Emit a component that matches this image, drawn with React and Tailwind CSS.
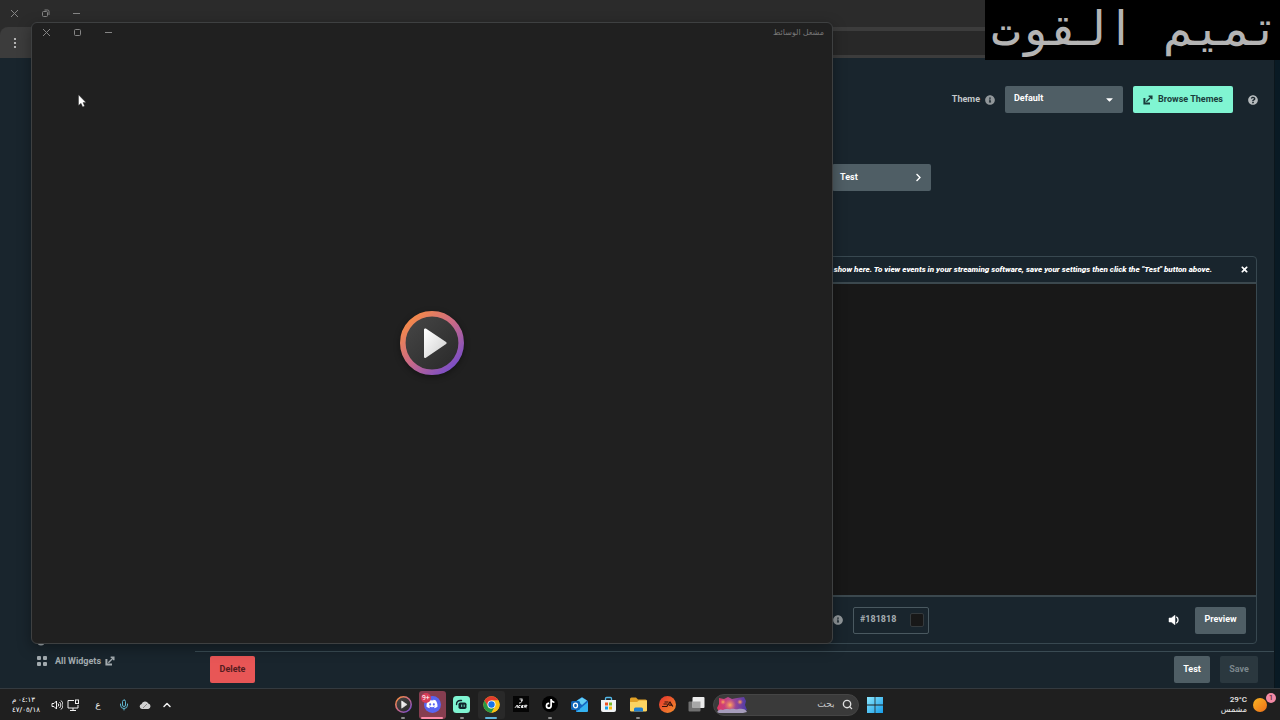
import React from 'react'
import { ChevronUp, Mic, Search } from 'lucide-react'
import { FaDiscord, FaTiktok, FaInfoCircle, FaQuestionCircle, FaCaretDown, FaChevronRight, FaTimes } from 'react-icons/fa'
import clsx from 'clsx'

const uiFont = 'font-[Roboto,"DejaVu_Sans",sans-serif]'

function CloseGlyph() {
  return (
    <svg width="9" height="9" viewBox="0 0 9 9" fill="none" stroke="currentColor">
      <path d="M1 1l7 7M8 1L1 8" />
    </svg>
  )
}

function MaximizeGlyph() {
  return (
    <svg width="9" height="9" viewBox="0 0 9 9" fill="none" stroke="currentColor">
      <rect x="1.5" y="1.5" width="6" height="6" rx="1" />
    </svg>
  )
}

function RestoreGlyph() {
  return (
    <svg width="9" height="9" viewBox="0 0 9 9" fill="none" stroke="currentColor">
      <rect x="1.5" y="2.5" width="5" height="5" rx="1" />
      <path d="M3.5 1h3.2c.8 0 1.3.5 1.3 1.3V6" />
    </svg>
  )
}

function MinimizeGlyph() {
  return (
    <svg width="9" height="9" viewBox="0 0 9 9" fill="none" stroke="currentColor">
      <path d="M1 4.5h7" />
    </svg>
  )
}

function WindowControls({ maximized }) {
  const controls = [
    { label: 'Close', icon: CloseGlyph },
    { label: maximized ? 'Restore' : 'Maximize', icon: maximized ? RestoreGlyph : MaximizeGlyph },
    { label: 'Minimize', icon: MinimizeGlyph },
  ]
  return (
    <div className="flex h-full">
      {controls.map(({ label, icon: Icon }) => (
        <button key={label} type="button" aria-label={label} className="flex w-[31px] items-center justify-center pr-[2px] pb-px text-[#858585]">
          <Icon />
        </button>
      ))}
    </div>
  )
}

function ExternalIcon({ size = 10 }) {
  return (
    <svg width={size} height={size} viewBox="0 0 12 12" fill="none" stroke="currentColor">
      <path d="M1.700 3.600V10.300H8.400" strokeWidth="2.400" />
      <path d="M4 8L10 2" strokeWidth="1.600" />
      <path d="M6.800 1.500h3.700v3.700" strokeWidth="1.900" />
    </svg>
  )
}

function VolumeIcon() {
  return (
    <svg width="12" height="12" viewBox="0 0 12 12" fill="currentColor">
      <path d="M1 4h2.300L7 1.200v9.600L3.300 8H1z" stroke="currentColor" strokeWidth="0.500" strokeLinejoin="round" />
      <path d="M8.300 2.800a3.800 3.800 0 0 1 0 6.400" fill="none" stroke="currentColor" strokeWidth="1.300" />
    </svg>
  )
}

function Sidebar() {
  return (
    <nav className="flex w-[195px] shrink-0 flex-col justify-end gap-2 pb-5 pl-9 text-[#a3abaf]">
      <a href="#alerts" aria-label="Alerts" className="pl-px">
        <svg width="8" height="8" viewBox="0 0 8 8" fill="currentColor">
          <circle cx="4" cy="4" r="3.500" />
        </svg>
      </a>
      <a href="#widgets" className="flex items-center text-[9px] leading-[14px] font-bold">
        <svg width="12" height="12" viewBox="0 0 12 12" fill="currentColor">
          <rect x="1" y="1" width="4" height="4" rx="1" />
          <rect x="7" y="1" width="4" height="4" rx="1" />
          <rect x="1" y="7" width="4" height="4" rx="1" />
          <rect x="7" y="7" width="4" height="4" rx="1" />
        </svg>
        <span className="mr-1 ml-[7px]">All Widgets</span>
        <ExternalIcon />
      </a>
    </nav>
  )
}

function ThemeBar() {
  return (
    <div className="flex h-[27px] items-center justify-end">
      <label htmlFor="theme" className="text-[9px] font-bold text-[#c3c8ca]">Theme</label>
      <FaInfoCircle size={10} className="mr-[10px] ml-[5px] text-[#91979a]" />
      <div className="relative h-full w-[118px]">
        <select id="theme" className="block h-full w-full appearance-none rounded-xs bg-[#4f5e65] px-[9px] pb-[2px] text-[9px] font-bold text-white">
          <option>Default</option>
        </select>
        <FaCaretDown size={11} className="pointer-events-none absolute top-2 right-2 text-white" />
      </div>
      <button type="button" className="ml-[10px] flex h-full w-[100px] items-center justify-center gap-[5px] rounded-xs bg-[#80f5d2] text-[9px] font-bold whitespace-nowrap text-[#1a3d3c]">
        <ExternalIcon />
        Browse Themes
      </button>
      <button type="button" aria-label="Help" className="ml-[15px] text-[#b5babc]">
        <FaQuestionCircle size={10} />
      </button>
    </div>
  )
}

function PreviewPanel() {
  return (
    <section className="mt-[65px] mr-px mb-[7px] flex flex-1 flex-col overflow-hidden rounded-[4px] border border-[#384850]">
      <div className="flex h-[27px] shrink-0 items-center justify-end border-b-2 border-[#3b484e] pr-[7px]">
        <p className="text-[8px] font-black text-white italic">
          show here. To view events in your streaming software, save your settings then click the "Test" button above.
        </p>
        <button type="button" aria-label="Dismiss" className="ml-7 text-white">
          <FaTimes size={9} />
        </button>
      </div>
      <div className="flex-1 bg-[#181818]" />
      <div className="flex h-[48px] shrink-0 items-center border-t-2 border-[#3b484e] pr-[10px]">
        <div className="flex flex-1 items-center pl-[622px]">
          <FaInfoCircle size={10} className="mr-[10px] shrink-0 text-[#91979a]" />
          <div className="flex h-[27px] w-[76px] shrink-0 items-center rounded-xs border border-[#4a5960] pr-1 pl-[6px]">
            <input
              aria-label="Background color"
              defaultValue="#181818"
              className="w-0 flex-1 bg-transparent text-[9px] font-bold text-[#a6adb1] outline-none"
            />
            <span className="h-[14px] w-[14px] rounded-xs border border-[#343a3d] bg-[#181818]" />
          </div>
        </div>
        <button type="button" aria-label="Volume" className="mr-[15px] text-white">
          <VolumeIcon />
        </button>
        <button type="button" className="h-[27px] w-[51px] rounded-xs bg-[#4f5e65] text-[9px] font-bold text-white">
          Preview
        </button>
      </div>
    </section>
  )
}

function BrowserWindow() {
  return (
    <div className="flex min-h-0 flex-1 flex-col">
      <div className="h-[27px] shrink-0 bg-[#2b2b2b]">
        <WindowControls maximized />
      </div>
      <div className="shrink-0 bg-[#2b2b2b]">
        <div className="flex h-[31px] items-center rounded-tl-lg bg-[#3c3c3c]">
          <button type="button" aria-label="Menu" className="flex w-[29px] justify-center text-[#d0d0d0]">
            <svg width="4" height="12" viewBox="0 0 4 12" fill="currentColor">
              <circle cx="2" cy="2" r="1.1" />
              <circle cx="2" cy="6" r="1.1" />
              <circle cx="2" cy="10" r="1.1" />
            </svg>
          </button>
          <div className="ml-5 h-6 flex-1 bg-[#282828]" />
        </div>
      </div>
      <div className="flex min-h-0 flex-1 bg-[#19252d]">
        <Sidebar />
        <main className="flex min-w-0 flex-1 flex-col">
          <div className="flex flex-1 flex-col pt-7 pr-4 pl-[15px]">
            <ThemeBar />
            <div className="mt-[51px] flex h-[27px] pl-[622px]">
              <button type="button" className="flex w-[99px] items-center justify-between rounded-xs bg-[#4f5e65] pr-2 pl-2 text-[9px] font-bold text-white">
                Test
                <FaChevronRight size={9} />
              </button>
            </div>
            <PreviewPanel />
          </div>
          <div className="flex h-[37px] shrink-0 items-center border-t border-[#3a4b53] pr-4 pb-px pl-[15px] text-[9px]">
            <button type="button" className="h-[27px] w-[45px] rounded-xs bg-[#e85656] font-bold text-[#551c20]">Delete</button>
            <button type="button" className="ml-auto h-[27px] w-9 rounded-xs bg-[#4f5e65] font-bold text-white">Test</button>
            <button type="button" className="ml-[10px] h-[27px] w-[38px] rounded-xs bg-[#2b383f] font-bold text-[#7a868c]">Save</button>
          </div>
        </main>
        <div className="w-[6px] shrink-0 border-l border-[#0b161c] bg-[#091a24]" />
      </div>
    </div>
  )
}

function PlayLogo({ size, id, ring = 3 }) {
  return (
    <svg width={size} height={size} viewBox="0 0 32 32" className="shrink-0">
      <defs>
        <linearGradient id={`${id}-ring`} x1="0.1" y1="0.1" x2="0.85" y2="0.9">
          <stop offset="0" stopColor="#f58a48" />
          <stop offset="0.5" stopColor="#ca6a87" />
          <stop offset="1" stopColor="#7e4fc4" />
        </linearGradient>
        <linearGradient id={`${id}-face`} x1="0" y1="0" x2="1" y2="1">
          <stop offset="0" stopColor="#484848" />
          <stop offset="1" stopColor="#272727" />
        </linearGradient>
        <linearGradient id={`${id}-play`} x1="0" y1="0" x2="1" y2="1">
          <stop offset="0" stopColor="#ffffff" />
          <stop offset="1" stopColor="#cfcfcf" />
        </linearGradient>
      </defs>
      <circle cx="16" cy="16" r={16 - ring / 2} fill={`url(#${id}-face)`} stroke={`url(#${id}-ring)`} strokeWidth={ring} />
      <path d="M12.6 9.3L22.7 16L12.6 22.9z" fill={`url(#${id}-play)`} stroke={`url(#${id}-play)`} strokeWidth="1.2" strokeLinejoin="round" />
    </svg>
  )
}

function MediaPlayer() {
  return (
    <div className="absolute top-[22px] left-[31px] flex h-[622px] w-[802px] flex-col rounded-md border border-[#3e4041] bg-[#202020] shadow-[0_4px_14px_rgba(0,0,0,0.35)]">
      <div className="flex h-5 shrink-0 items-center justify-between pr-2">
        <WindowControls />
        <span dir="rtl" className="text-[8px] text-[#777777]">مشغل الوسائط</span>
      </div>
      <div className="flex flex-1 items-center justify-center">
        <div className="rounded-full shadow-[0_2px_6px_rgba(0,0,0,0.4)]">
          <PlayLogo size={64} id="player" ring={2.8} />
        </div>
      </div>
    </div>
  )
}

function DiscordIcon() {
  return (
    <span className="flex h-[17px] w-[17px] items-center justify-center rounded-full bg-[#5865f2] text-white">
      <FaDiscord size={12} />
    </span>
  )
}

function TiktokIcon() {
  return (
    <span className="flex h-4 w-4 items-center justify-center rounded-full bg-black text-white">
      <FaTiktok size={10} />
    </span>
  )
}

function StreamlabsIcon() {
  return (
    <svg width="17" height="17" viewBox="0 0 17 17">
      <rect width="17" height="17" rx="3.500" fill="#80f5d2" />
      <path d="M3.500 8.500C3.500 6 5 4.500 7.500 4.500H8.500" fill="none" stroke="#10242b" strokeWidth="1.400" strokeLinecap="round" />
      <rect x="5.500" y="6.500" width="8" height="6.500" rx="1.800" fill="#10242b" />
      <path d="M8.700 9v1.500M11.200 9v1.500" stroke="#80f5d2" strokeWidth="0.900" strokeLinecap="round" />
    </svg>
  )
}

function ChromeIcon() {
  return (
    <svg width="17" height="17" viewBox="0 0 48 48">
      <circle cx="24" cy="24" r="23" fill="#fbc116" />
      <path d="M4.1 12.500A23 23 0 0 1 43.900 12.500H24L14 29.700z" fill="#e33b2e" />
      <path d="M4.100 12.500L14 29.700C16 33 20 35.500 24 35.500L33.900 29.700L24 47A23 23 0 0 1 4.100 12.500z" fill="#279847" />
      <path d="M24 12.500H43.900A23 23 0 0 1 24 47L34 29.700z" fill="#fbc116" />
      <circle cx="24" cy="24" r="11.500" fill="#fff" />
      <circle cx="24" cy="24" r="9" fill="#1a73e8" />
    </svg>
  )
}

function AcerIcon() {
  return (
    <svg width="16" height="16" viewBox="0 0 16 16">
      <rect width="16" height="16" fill="#050505" />
      <path d="M6.500 3h3L8 4.500h1.500L7.500 7H6" stroke="#ddd" fill="none" />
      <path d="M2 11.800L4.300 9v2.800M7.500 9.500H6L5.300 11.500h1.600M10.500 9.500H8.800L8.200 11.500h1.900M8.500 10.500h1.500M11 11.800l.7-2.500h2.300l-.6 1.300h-1.500l1.600 1.200" stroke="#eee" fill="none" />
    </svg>
  )
}

function OutlookIcon() {
  return (
    <svg width="17" height="17" viewBox="0 0 17 17">
      <path d="M5 5L11 1L17 5V14.500A1.500 1.500 0 0 1 15.500 16H5z" fill="#1766c0" />
      <path d="M6 4.600L11 1.500L16 4.600L11 9z" fill="#62cff5" />
      <path d="M17 6V14.500A1.500 1.500 0 0 1 15.500 16H5z" fill="#35b3f1" />
      <rect x="0" y="5" width="9" height="9" rx="1.500" fill="#0f65b8" />
      <ellipse cx="4.500" cy="9.500" rx="2" ry="2.300" fill="none" stroke="#fff" strokeWidth="1.300" />
    </svg>
  )
}

function StoreIcon() {
  return (
    <svg width="17" height="17" viewBox="0 0 17 17">
      <path d="M5.500 4V2.500a1 1 0 0 1 1-1h4a1 1 0 0 1 1 1V4" fill="none" stroke="#54b9e8" strokeWidth="1.300" />
      <path d="M1 4h15v10a2 2 0 0 1-2 2H3a2 2 0 0 1-2-2z" fill="#f0f2f4" />
      <path d="M5 6.500h3v3H5z" fill="#ee5424" />
      <path d="M9 6.500h3v3H9z" fill="#7ab829" />
      <path d="M5 10.500h3v3H5z" fill="#18a0e8" />
      <path d="M9 10.500h3v3H9z" fill="#fbb80d" />
    </svg>
  )
}

function FolderIcon() {
  return (
    <svg width="17" height="17" viewBox="0 0 17 17">
      <path d="M0 3a1.500 1.500 0 0 1 1.500-1.500H6L8 3.500h7.500A1.500 1.500 0 0 1 17 5v10H0z" fill="#e2a126" />
      <path d="M0 6h7l2-1.500h8V14a1.500 1.500 0 0 1-1.500 1.500h-14A1.500 1.500 0 0 1 0 14z" fill="#fbd462" />
      <path d="M4 15.500V13a1.500 1.500 0 0 1 1.500-1.500h6A1.500 1.500 0 0 1 13 13v2.500z" fill="#1f7fd1" />
    </svg>
  )
}

function EaIcon() {
  return (
    <svg width="17" height="17" viewBox="0 0 17 17">
      <defs>
        <linearGradient id="ea" x1="0" y1="0" x2="1" y2="1">
          <stop offset="0" stopColor="#e6322e" />
          <stop offset="1" stopColor="#f3902b" />
        </linearGradient>
      </defs>
      <circle cx="8.500" cy="8.500" r="8.500" fill="url(#ea)" />
      <path d="M5.500 6h4M4.500 8h4M3 10.500h4.800L11 6l2.800 4.500M10 9.200h2.500" stroke="#30100c" strokeWidth="1.200" fill="none" />
    </svg>
  )
}

function TaskViewIcon() {
  return (
    <svg width="17" height="17" viewBox="0 0 17 17">
      <rect x="0.500" y="5.500" width="12" height="10" rx="1" fill="#707070" />
      <rect x="4.500" y="1" width="12" height="11" rx="1" fill="#ececec" />
      <path d="M4.500 5.500h8V12h-8z" fill="#a7a7a7" />
    </svg>
  )
}

function WindowsIcon() {
  return (
    <svg width="16" height="16" viewBox="0 0 16 16">
      <defs>
        <linearGradient id="win" x1="0" y1="0" x2="1" y2="1">
          <stop offset="0" stopColor="#8be6fc" />
          <stop offset="1" stopColor="#169de9" />
        </linearGradient>
      </defs>
      <path d="M0 0h7.600v7.600H0zM8.400 0H16v7.600H8.400zM0 8.400h7.600V16H0zM8.400 8.400H16V16H8.400z" fill="url(#win)" />
    </svg>
  )
}

function SearchArt() {
  return (
    <svg width="32" height="18" viewBox="0 0 32 18">
      <defs>
        <linearGradient id="nebula" x1="0" y1="0" x2="1" y2="0">
          <stop offset="0" stopColor="#e2365f" />
          <stop offset="0.450" stopColor="#b34b92" />
          <stop offset="1" stopColor="#473ba8" />
        </linearGradient>
        <radialGradient id="glow">
          <stop offset="0" stopColor="#ffb25c" />
          <stop offset="1" stopColor="#f0705c" stopOpacity="0" />
        </radialGradient>
      </defs>
      <path d="M3 2l5 1 4-2 4 2 5-1 7-1 2 4-1 4 2 5-5 2H3L1 12l2-4z" fill="url(#nebula)" />
      <circle cx="14" cy="9" r="6" fill="url(#glow)" />
      <circle cx="7" cy="6" r="3" fill="url(#glow)" />
      <circle cx="24" cy="6" r="3" fill="url(#glow)" />
      <path d="M1 16c2-3 4-3 6-2 3-2 6 0 8-1 3-1 5 1 7 0 4-1 8 0 9 3l-4 1H3z" fill="#a69dbb" />
    </svg>
  )
}

const apps = [
  { key: 'Media Player', icon: <PlayLogo size={17} id="task" ring={3} />, dot: true },
  { key: 'Discord', icon: <DiscordIcon />, active: true },
  { key: 'Streamlabs', icon: <StreamlabsIcon />, dot: true },
  { key: 'Chrome', icon: <ChromeIcon />, focused: true },
  { key: 'Acer', icon: <AcerIcon /> },
  { key: 'TikTok', icon: <TiktokIcon />, dot: true },
  { key: 'Outlook', icon: <OutlookIcon /> },
  { key: 'Store', icon: <StoreIcon /> },
  { key: 'Explorer', icon: <FolderIcon />, dot: true },
  { key: 'EA', icon: <EaIcon /> },
  { key: 'Task view', icon: <TaskViewIcon /> },
]

function Tray() {
  return (
    <div className="flex flex-1 items-center text-[#f0f0f0]">
      <div dir="rtl" className="w-[30px] text-left text-[7px] leading-[10px] font-medium whitespace-nowrap text-white">
        <div>٠٤:١٣ م</div>
        <div>٤٧/٠٥/١٨</div>
      </div>
      <svg width="12" height="12" viewBox="0 0 12 12" fill="none" stroke="currentColor" className="ml-[9px]">
        <path d="M1 4.500h2L5.500 2v8L3 7.500H1zM7 4.500a2 2 0 0 1 0 3M8.500 3a4 4 0 0 1 0 6M10 1.500a6 6 0 0 1 0 9" />
      </svg>
      <svg width="12" height="12" viewBox="0 0 12 12" fill="none" stroke="currentColor" className="ml-1">
        <path d="M7 1.500H1v7.500h10V6M3 11.500h6M6 9v2.500" />
        <rect x="8.500" y="1" width="3" height="3.500" />
      </svg>
      <span className="ml-[14px] w-[10px] text-center text-[9px] leading-3">ع</span>
      <Mic size={12} className="ml-[15px] text-[#5fb4cc]" />
      <svg width="12" height="12" viewBox="0 0 12 12" fill="#d2d2d2" className="ml-[9px]">
        <path d="M3 10a2.600 2.600 0 0 1-.4-5.100A3.600 3.600 0 0 1 9.300 4.500 2.800 2.800 0 0 1 9.200 10z" />
        <path d="M4 9l4-4" stroke="#888" />
      </svg>
      <ChevronUp size={12} strokeWidth={3} className="ml-[10px]" />
    </div>
  )
}

function Taskbar() {
  return (
    <footer className="relative flex h-8 shrink-0 items-center border-t border-[#343a3f] bg-[#1f1f1f] pr-5 pl-3">
      <Tray />
      <div className="flex h-full items-center">
        <div className="flex w-[321px] justify-between">
          {apps.map(app => (
            <button
              key={app.key}
              type="button"
              aria-label={app.key}
              className={clsx(
                'relative flex h-7 w-[27px] items-center justify-center rounded-[3px] pb-px',
                app.active && 'bg-[#863e50]',
                app.focused && 'bg-[#292929]',
              )}
            >
              {app.icon}
              {app.active && (
                <span className="absolute top-[2px] left-[2px] flex h-[10px] items-center rounded-full bg-[#d73d59] px-px text-[7px] leading-[10px] text-white">9+</span>
              )}
              {app.active && <span className="absolute bottom-0 h-[2px] w-[22px] rounded-full bg-[#ff8ba7]" />}
              {app.focused && <span className="absolute bottom-0 h-[2px] w-3 rounded-full bg-[#5fb4dc]" />}
              {app.dot && <span className="absolute bottom-0 h-[2px] w-1 rounded-full bg-[#8b8b8b]" />}
            </button>
          ))}
        </div>
        <label className="ml-[2px] flex h-[22px] w-[146px] items-center rounded-full border border-[#454545] bg-[#3a3a3a] pr-[5px] pl-[2px] text-[#dedede]">
          <SearchArt />
          <input
            type="text"
            dir="rtl"
            aria-label="بحث"
            placeholder="بحث"
            className="mr-[7px] w-0 flex-1 bg-transparent text-[9px] outline-none placeholder:text-[#c8c8c8]"
          />
          <Search size={11} strokeWidth={3} />
        </label>
        <button type="button" aria-label="Start" className="ml-2">
          <WindowsIcon />
        </button>
      </div>
      <div className="flex flex-1 items-center justify-end text-[#ececec]">
        <div className="mr-[6px] text-right text-[8px] leading-[10px]">
          <div className="font-medium">29°C</div>
          <div dir="rtl" className="text-left">مشمس</div>
        </div>
        <span className="-mr-[7px] h-[14px] w-[14px] rounded-full bg-linear-to-br from-[#f9b523] to-[#ec6d19]" />
        <span className="absolute top-1 right-1 flex h-[10px] w-[10px] items-center justify-center rounded-full bg-[#f38aa5] text-[8px] text-[#4b1924]">1</span>
      </div>
    </footer>
  )
}

export default function App() {
  return (
    <div className={clsx('relative flex h-screen flex-col overflow-hidden bg-[#19252d]', uiFont)}>
      <BrowserWindow />
      <Taskbar />
      <MediaPlayer />

      {/* Name tag over the top right corner */}
      <div
        dir="rtl"
        className='absolute top-0 right-0 h-[60px] w-[295px] bg-black font-["DejaVu_Sans_Mono",monospace] text-[48px] leading-[56px] whitespace-nowrap text-[#b4b4b4]'
      >
        تميم القوت
      </div>

      {/* Mouse pointer */}
      <svg width="9" height="14" viewBox="0 0 9 14" className="absolute top-[94px] left-[78px]">
        <path d="M0.500 0.800V11.500L3 9.300L4.700 13L6.600 12.100L5 8.600H8z" fill="#fff" stroke="#222" strokeWidth="0.400" />
      </svg>
    </div>
  )
}
